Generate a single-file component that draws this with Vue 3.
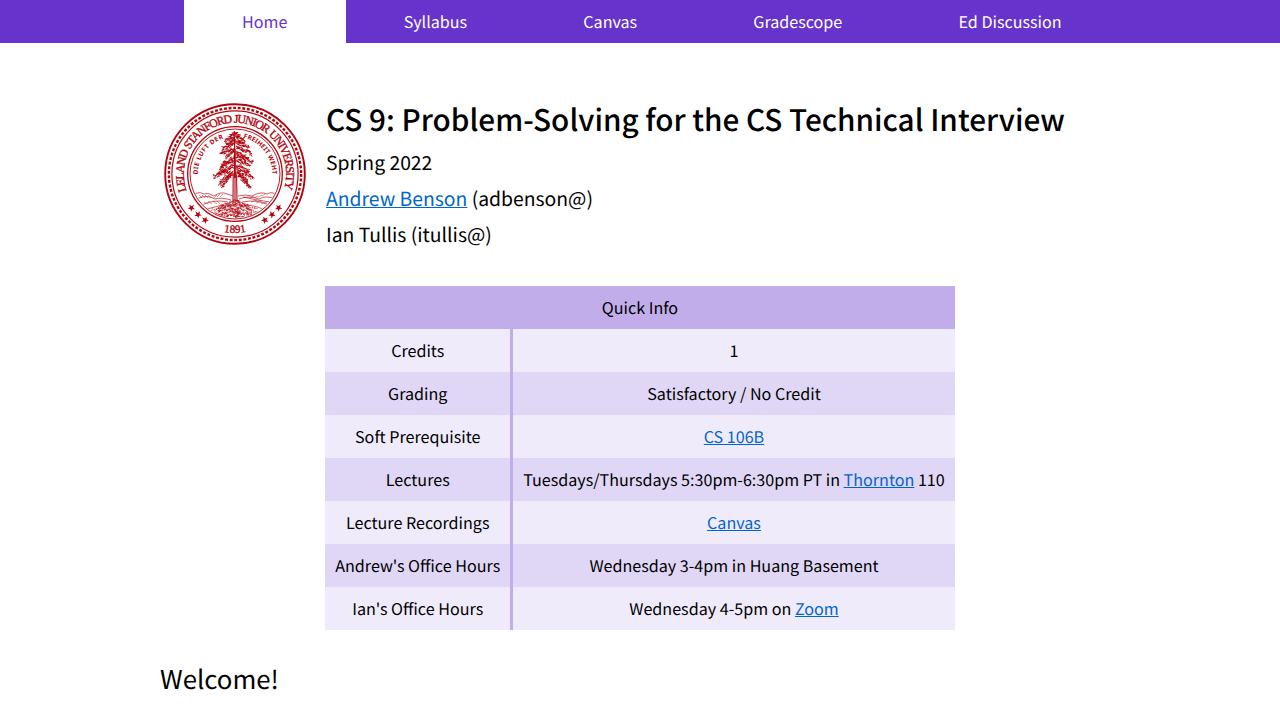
<script setup>
const nav = ['Home', 'Syllabus', 'Canvas', 'Gradescope', 'Ed Discussion']

const rows = [
  { label: 'Credits', before: '1' },
  { label: 'Grading', before: 'Satisfactory / No Credit' },
  { label: 'Soft Prerequisite', link: 'CS 106B' },
  { label: 'Lectures', before: 'Tuesdays/Thursdays 5:30pm-6:30pm PT in ', link: 'Thornton', after: ' 110' },
  { label: 'Lecture Recordings', link: 'Canvas' },
  { label: "Andrew's Office Hours", before: 'Wednesday 3-4pm in Huang Basement' },
  { label: "Ian's Office Hours", before: 'Wednesday 4-5pm on ', link: 'Zoom' }
]

// Small seeded generator so the foliage is drawn identically each time
let seed = 7
const rand = () => {
  seed = (seed * 16807) % 2147483647
  return seed / 2147483647
}

// Branches: start x, start y, tip x, tip y, thickness
const branches = [
  [-0.7, -41, -4, -37, 2], [-0.7, -41, 3, -37.5, 2],
  [0, -38, -9.5, -33, 2.6], [0, -38, 9, -34, 2.6],
  [0, -34, -8, -29, 2.6], [0, -34, 8, -30, 2.4],
  [0, -30, -12, -25, 3], [0, -31, 13, -27, 2.6],
  [0, -26, -13.5, -20, 3], [0, -27, 15.5, -20, 3.2],
  [0, -22, -8, -17, 2.8], [0, -22, 11, -17, 2.6],
  [0, -17, -13, -9, 3.2], [0, -18, 16.5, -12, 3],
  [0, -13, -14, -6, 3], [0, -14, 14, -9, 2.6],
  [0, -8, -17, 0, 3.4], [0, -8, 13, -2, 3.4],
  [-3, -4, -21, 3, 3.6], [2, -4, 17.5, 4, 3.4],
  [0, -2, -15, 10, 3.4], [0, -2, 12, 8, 3.6],
  [-3, 1, -12, 13, 2.4], [3, 2, 14.5, 14, 2.8]
]

let needles = ''
for (const [x1, y1, x2, y2, w] of branches) {
  const count = Math.round(Math.hypot(x2 - x1, y2 - y1) * 2.6)
  for (let i = 0; i < count; i++) {
    const t = (i + rand()) / count
    const x = x1 + (x2 - x1) * t + (rand() - 0.5) * 1.8
    const y = y1 + (y2 - y1) * (t * 0.6 + t * t * 0.4) + (rand() - 0.5) * w * 1.2
    const dx = Math.sign(x2 - x1) * (1 + rand() * 1.4)
    const dy = (rand() - 0.3) * 2.1
    needles += `M${x.toFixed(1)} ${y.toFixed(1)}l${dx.toFixed(1)} ${dy.toFixed(1)}`
  }
}

let ground = ''
for (let i = 0; i < 420; i++) {
  const x = (rand() + rand() - 1) * 26
  const top = 25 + Math.abs(x) * 0.4
  const y = top + rand() * Math.max(0, 43 - top)
  ground += `M${(x - 0.7).toFixed(1)} ${y.toFixed(1)}l${(1 + rand() * 1.2).toFixed(1)} ${(Math.sign(x) * rand()).toFixed(1)}`
}

const starPoints = Array.from({ length: 10 }, (_, i) => {
  const r = i % 2 ? 1.6 : 3.9
  const a = (i * Math.PI) / 5 - Math.PI / 2
  return `${(r * Math.cos(a)).toFixed(2)},${(r * Math.sin(a)).toFixed(2)}`
}).join(' ')

const stars = [
  [-43.6, 33.8, 40], [-37, 40.6, 32], [-29.9, 46.1, 24],
  [43.6, 33.8, -40], [37, 40.6, -32], [29.9, 46.1, -24]
]
</script>

<template>
  <nav class="bar">
    <a v-for="(item, i) in nav" :key="item" class="tab" :class="{ active: i === 0 }">{{ item }}</a>
  </nav>
  <main class="page">
    <header class="intro">
      <svg class="seal" viewBox="-71 -71 142 142" width="142" height="142">
        <defs>
          <path id="arc-name" d="M-48.3 16.9A51.2 51.2 0 1 1 48.3 16.9" />
          <path id="arc-left" d="M-37.3 .5A37.3 37.3 0 0 1 -10.9 -35.7" />
          <path id="arc-right" d="M8.4 -36.3A37.3 37.3 0 0 1 37.3 1" />
          <path id="arc-year" d="M-20 55.5A59 59 0 0 0 20 55.5" />
          <clipPath id="inner"><circle r="44" /></clipPath>
        </defs>
        <g class="line">
          <circle r="69.8" stroke-width="1.9" />
          <circle r="66.1" stroke-width="2.4" stroke-dasharray="2.9 1.714" />
          <circle r="63.1" stroke-width="1.2" />
          <circle r="47.3" stroke-width="1.3" />
          <circle r="45" stroke-width=".9" />
        </g>
        <g class="ink">
          <text class="name"><textPath href="#arc-name" textLength="193">LELAND STANFORD JUNIOR UNIVERSITY</textPath></text>
          <text class="motto"><textPath href="#arc-left" textLength="47">DIE LUFT DER</textPath></text>
          <text class="motto"><textPath href="#arc-right" textLength="50">FREIHEIT WEHT</textPath></text>
          <text class="year"><textPath href="#arc-year" startOffset="50%" text-anchor="middle">1891</textPath></text>
          <polygon
            v-for="([x, y, a], i) in stars"
            :key="i"
            :points="starPoints"
            :transform="`translate(${x} ${y}) rotate(${a})`"
          />
        </g>
        <g class="line" clip-path="url(#inner)">
          <g stroke-width=".65">
            <path d="M-41 20Q-35 17 -31 20Q-27 18 -21 22Q-14 17 -8 20L-2 22M3 22Q12 20 17 22Q26 17 32 20Q37 17 42 21" />
            <path d="M-39 25Q-28 20 -20 25Q-14 23 -4 26M4 25Q14 21 24 25Q31 21 40 25M8 23Q20 26 35 28M-33 31Q-22 25 -7 28M7 28Q22 25 34 31" />
            <path d="M-28 35Q-15 30 0 31Q17 30 28 35" />
          </g>
          <path
            stroke-width=".45"
            d="M-36 21l3 3M-33 21l3 3M-30 21l3 3M-27 21l3 3M-18 21l-3 3M-15 20l-3 3M-12 20l-3 3M-31 28l4 2M-27 27l4 3M-22 27l4 3M-18 27l3 3M15 24l4 -2M19 24l4 -2M23 23l4 -2M27 22l3 -2M16 28l6 -2M21 29l6 -2M26 30l6 -2"
          />
          <path :d="ground" stroke-width=".6" />
        </g>
        <g class="line">
          <path d="M-.7 -43L-.3 -24" stroke-width="1.2" />
          <path d="M-.2 -25L0 4" stroke-width="1.8" />
          <path d="M-1.8 1L-2 28M0 2V29M1.6 1L2 28" stroke-width="1.1" />
          <path :d="needles" stroke-width=".9" />
        </g>
      </svg>
      <div class="details">
        <h1>CS 9: Problem-Solving for the CS Technical Interview</h1>
        <p>Spring 2022</p>
        <p><a class="link">Andrew Benson</a> (adbenson@)</p>
        <p>Ian Tullis (itullis@)</p>
      </div>
    </header>
    <table class="info">
      <thead>
        <tr><th colspan="2">Quick Info</th></tr>
      </thead>
      <tbody>
        <tr v-for="row in rows" :key="row.label">
          <td class="label">{{ row.label }}</td>
          <td>{{ row.before }}<a v-if="row.link" class="link">{{ row.link }}</a>{{ row.after }}</td>
        </tr>
      </tbody>
    </table>
    <h2>Welcome!</h2>
  </main>
</template>

<style>
body {
  margin: 0;
  background: #fff;
  overflow: hidden;
}
</style>

<style scoped>
.bar,
.page {
  font-family: "Noto Sans CJK SC", "Noto Sans CJK JP", sans-serif;
  font-size: 16.13px;
  text-rendering: geometricPrecision;
  color: #000;
}
.bar {
  display: flex;
  height: 43px;
  padding-left: 184px;
  background: #6633cc;
}
.tab {
  padding: 10px 58.1px;
  line-height: 23px;
  color: #fff;
  white-space: nowrap;
}
.tab.active {
  background: #fff;
  color: #6633cc;
}
.page {
  width: 960px;
  margin: 0 auto;
}
.intro {
  display: flex;
  padding-top: 54px;
}
.seal {
  flex: none;
  margin: 6px 20px 0 4px;
}
.line {
  fill: none;
  stroke: #b1040e;
}
.ink {
  fill: #b1040e;
}
.name {
  font: 11.9px "Liberation Serif", serif;
  word-spacing: 1px;
  stroke: #b1040e;
  stroke-width: 0.35px;
}
.motto {
  font: bold 6.4px "Noto Sans", sans-serif;
}
.year {
  font: 11.2px "Liberation Serif", serif;
  stroke: #b1040e;
  stroke-width: 0.35px;
}
h1 {
  margin: 0;
  font-size: 29.7px;
  line-height: 44px;
  padding-bottom: 3px;
  font-weight: 500;
  white-space: nowrap;
}
p {
  margin: 0;
  font-size: 19.35px;
  line-height: 36px;
}
.link {
  color: #0066cc;
  text-decoration: underline;
}
.info {
  margin: 34px auto 0;
  border-collapse: collapse;
  text-align: center;
}
.info th,
.info td {
  padding: 10px;
  line-height: 23px;
  font-weight: 400;
  white-space: nowrap;
}
.info th {
  background: #c0adea;
}
.info tr {
  background: #dfd7f5;
}
.info tbody tr:nth-child(odd) {
  background: #efebfa;
}
.info .label {
  border-right: 3px solid #c0adea;
}
h2 {
  margin: 30px 0 0;
  font-size: 25.8px;
  line-height: 38px;
  font-weight: 400;
}
</style>
